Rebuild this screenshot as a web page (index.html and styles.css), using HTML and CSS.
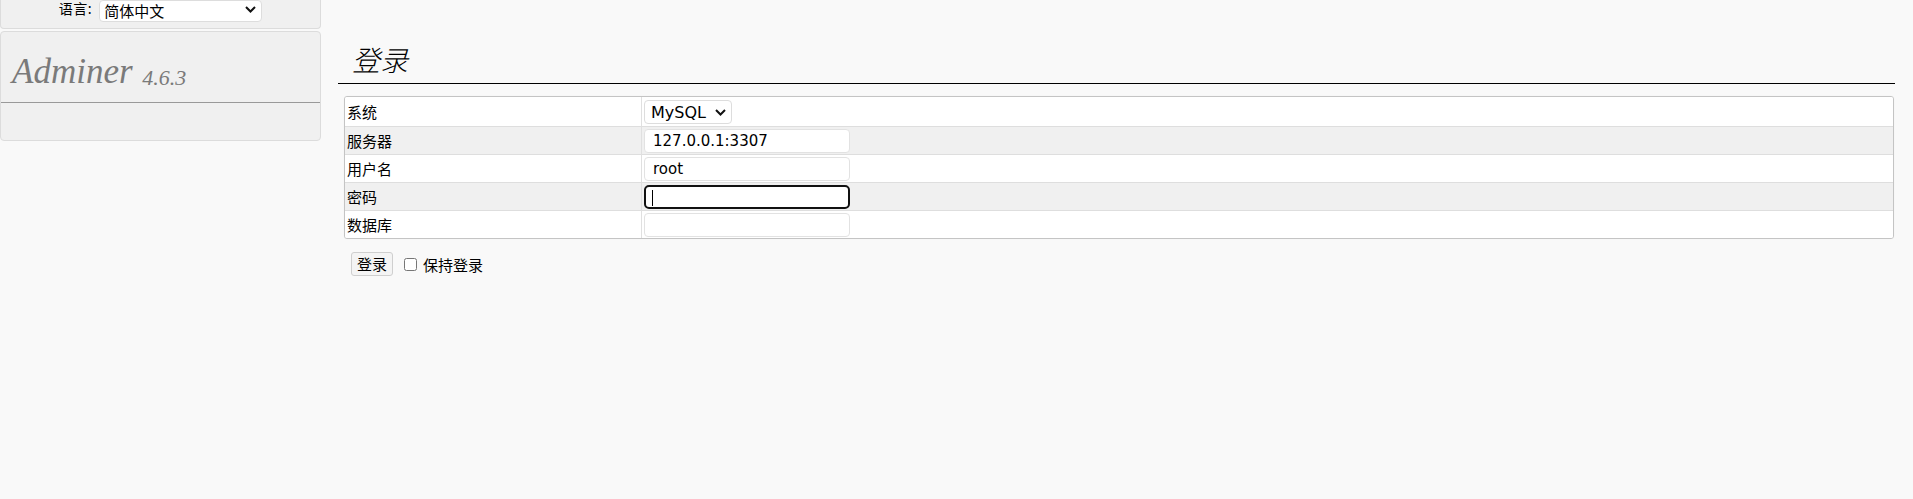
FILE: index.html
```html
<!DOCTYPE html>
<html lang="zh-CN">
<head>
<meta charset="utf-8">
<title>登录 - Adminer</title>
<link rel="stylesheet" href="styles.css">
</head>
<body>
<div class="page">
  <aside class="sidebar">
    <div class="lang-panel">
      <span class="lang-label">语言:</span>
      <span class="sel-wrap lang-wrap">
        <select class="lang-select"><option>简体中文</option></select>
        <svg class="chev" width="11" height="7" viewBox="0 0 11 7"><path d="M1 1l4.5 4.5L10 1" fill="none" stroke="#111" stroke-width="2"/></svg>
      </span>
    </div>
    <div class="menu-panel">
      <h1 class="brand">Adminer <span class="version">4.6.3</span></h1>
      <div class="menu-body"></div>
    </div>
  </aside>
  <main class="content">
    <h2 class="title">登录</h2>
    <table class="login">
      <tr class="odd">
        <th>系统</th>
        <td>
          <span class="sel-wrap drv-wrap">
            <select class="driver"><option>MySQL</option></select>
            <svg class="chev" width="11" height="7" viewBox="0 0 11 7"><path d="M1 1l4.5 4.5L10 1" fill="none" stroke="#111" stroke-width="2"/></svg>
          </span>
        </td>
      </tr>
      <tr class="even">
        <th>服务器</th>
        <td><input class="field" type="text" value="127.0.0.1:3307"></td>
      </tr>
      <tr class="odd">
        <th>用户名</th>
        <td><input class="field" type="text" value="root"></td>
      </tr>
      <tr class="even">
        <th>密码</th>
        <td><span class="focus-wrap"><input class="field focused" type="password" value=""><span class="caret"></span></span></td>
      </tr>
      <tr class="odd">
        <th>数据库</th>
        <td><input class="field" type="text" value=""></td>
      </tr>
    </table>
    <div class="actions">
      <button class="submit" type="button">登录</button>
      <label class="keep"><input type="checkbox" class="check"><span>保持登录</span></label>
    </div>
  </main>
</div>
</body>
</html>
```
FILE: styles.css
```css
html, body {
  margin: 0;
  padding: 0;
  background: #f9f9f9;
}
body {
  font-family: "DejaVu Sans", "Noto Sans CJK SC", sans-serif;
  font-size: 15px;
  color: #000;
}
.page {
  display: flex;
  align-items: flex-start;
}
.sidebar {
  width: 321px;
  flex: none;
  display: flex;
  flex-direction: column;
  gap: 2px;
}
.lang-panel {
  height: 28px;
  background: #f0f0f0;
  border: 1px solid #dcdcdc;
  border-top: none;
  border-radius: 0 0 4px 4px;
  display: flex;
  justify-content: center;
  align-items: flex-start;
  gap: 7px;
  font-family: "Noto Sans CJK SC", sans-serif;
}
.lang-label {
  font-size: 14px;
  line-height: 20px;
  margin-top: -2px;
  letter-spacing: 0.5px;
}
.sel-wrap {
  position: relative;
  display: inline-block;
}
.sel-wrap select {
  appearance: none;
  -webkit-appearance: none;
  background: #fff;
  border: 1px solid #dddddd;
  border-radius: 4px;
  color: #000;
  margin: 0;
  outline: none;
}
.chev {
  position: absolute;
  top: 50%;
  margin-top: -3px;
  pointer-events: none;
}
.lang-select {
  width: 163px;
  height: 22px;
  margin-top: -2px !important;
  padding: 0 0 0 4px;
  font-family: "Noto Sans CJK SC", sans-serif;
  font-size: 15px;
  line-height: 20px;
}
.lang-wrap .chev {
  right: 6px;
  margin-top: -5px;
}
.menu-panel {
  background: #f0f0f0;
  border: 1px solid #dcdcdc;
  border-radius: 4px;
}
.brand {
  margin: 0;
  padding: 20px 10px 10px 11px;
  font-family: "Liberation Serif", "DejaVu Serif", serif;
  font-style: italic;
  font-weight: normal;
  font-size: 35px;
  line-height: 40px;
  color: #7a7a7a;
  border-bottom: 1px solid #999;
}
.version {
  font-size: 22px;
  line-height: 1;
  margin-left: 1px;
  position: relative;
  top: 2px;
}
.menu-body {
  height: 37px;
}
.content {
  flex: 1;
  min-width: 0;
  margin-left: 17px;
  margin-right: 18px;
}
.title {
  margin: 31px 0 0 0;
  padding: 10px 14px 6px 14px;
  font-family: "Noto Sans CJK SC", serif;
  font-style: italic;
  font-weight: 300;
  font-size: 28px;
  line-height: 36px;
  border-bottom: 1px solid #000;
}
.login {
  margin: 12px 1px 0 6px;
  width: calc(100% - 7px);
  border: 1px solid #c4c4c4;
  border-radius: 3px;
  border-collapse: separate;
  border-spacing: 0;
  overflow: hidden;
  box-shadow: 0 0 1px rgba(0,0,0,0.08);
}
.login th, .login td {
  padding: 0;
  vertical-align: middle;
}
.login th {
  width: 294px;
  text-align: left;
  font-family: "Noto Sans CJK SC", sans-serif;
  font-weight: normal;
  font-size: 15px;
  padding-left: 2px;
  border-right: 1px solid #e0e0e0;
}
.login td {
  padding-left: 2px;
}
.login tr + tr th, .login tr + tr td {
  border-top: 1px solid #dedede;
  height: 27px;
}
.login tr:first-child th, .login tr:first-child td {
  height: 29px;
}
.odd th, .odd td { background: #fff; }
.even th, .even td { background: #f0f0f0; }
.driver {
  width: 88px;
  height: 24px;
  padding: 0 0 0 6px;
  font-family: "DejaVu Sans", sans-serif;
  font-size: 16px;
  display: block;
}
.drv-wrap {
  display: block;
  width: 88px;
  margin-top: 1px;
}
.drv-wrap .chev {
  right: 6px;
}
.field {
  box-sizing: border-box;
  display: block;
  width: 206px;
  height: 24px;
  margin: 0;
  padding: 0 0 0 8px;
  border: 1px solid #e2e2e2;
  border-radius: 4px;
  background: #fff;
  font-family: "DejaVu Sans", sans-serif;
  font-size: 15px;
  color: #000;
  outline: none;
}
.focus-wrap {
  position: relative;
  display: block;
  width: 206px;
}
.field.focused {
  border: 2px solid #111;
  border-radius: 5px;
}
.caret {
  position: absolute;
  left: 8px;
  top: 5px;
  width: 1px;
  height: 16px;
  background: #000;
}
.actions {
  display: flex;
  align-items: center;
  margin: 13px 0 0 13px;
}
.submit {
  box-sizing: border-box;
  height: 24px;
  padding: 0 5px;
  border: 1px solid #cfcfcf;
  border-radius: 3px;
  background: #f4f4f4;
  font-family: "Noto Sans CJK SC", sans-serif;
  font-size: 15px;
  line-height: 20px;
  color: #000;
}
.keep {
  display: flex;
  align-items: center;
  margin-left: 7px;
  font-family: "Noto Sans CJK SC", sans-serif;
  font-size: 15px;
}
.check {
  width: 13px;
  height: 13px;
  margin: 0 6px 0 4px;
}
```
